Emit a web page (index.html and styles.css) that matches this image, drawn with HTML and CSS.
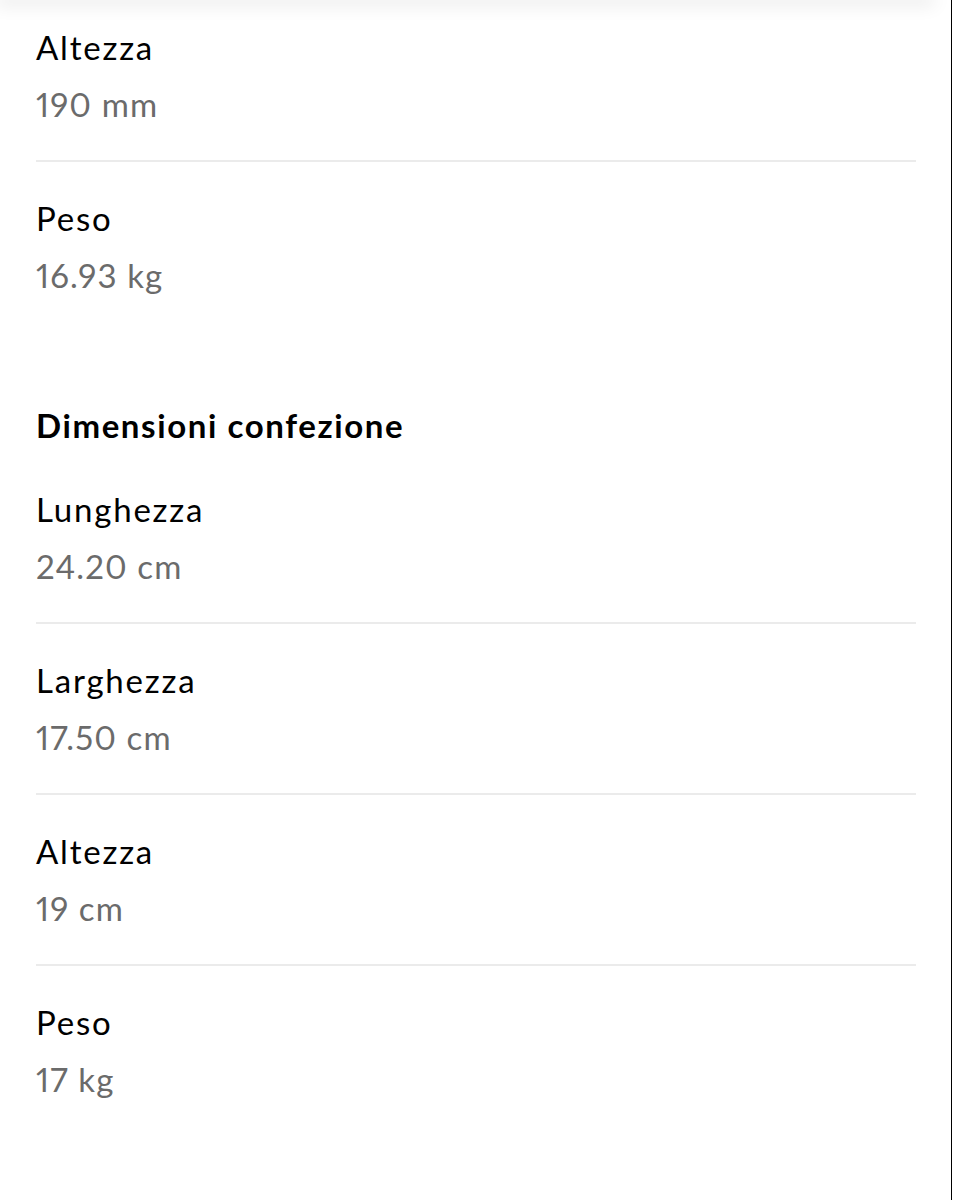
FILE: index.html
```html
<!DOCTYPE html>
<html lang="it">
<head>
    <meta charset="UTF-8">
    <meta name="viewport" content="width=device-width, initial-scale=1.0">
    <title>Specifiche</title>
    <link rel="stylesheet" href="styles.css">
</head>
<body>
    <div class="page">
        <div class="top-shadow"></div>

        <section class="spec-group spec-group-first">
            <div class="spec-row spec-row-first">
                <div class="spec-label">Altezza</div>
                <div class="spec-value">190 mm</div>
            </div>
            <div class="spec-row">
                <div class="spec-label">Peso</div>
                <div class="spec-value">16.93 kg</div>
            </div>
        </section>

        <section class="spec-group">
            <h2 class="spec-title">Dimensioni confezione</h2>
            <div class="spec-row">
                <div class="spec-label">Lunghezza</div>
                <div class="spec-value">24.20 cm</div>
            </div>
            <div class="spec-row">
                <div class="spec-label">Larghezza</div>
                <div class="spec-value">17.50 cm</div>
            </div>
            <div class="spec-row">
                <div class="spec-label">Altezza</div>
                <div class="spec-value">19 cm</div>
            </div>
            <div class="spec-row">
                <div class="spec-label">Peso</div>
                <div class="spec-value">17 kg</div>
            </div>
        </section>
    </div>
</body>
</html>
```

FILE: styles.css
```css
body {
    margin: 0;
    background-color: #fff;
    font-family: Lato, "Open Sans", sans-serif;
}
.page {
    width: 952px;
    min-height: 1200px;
    border-right: 1px solid #000;
    box-sizing: border-box;
    padding: 0 35px 0 36px;
    position: relative;
}
.top-shadow {
    position: absolute;
    top: 0;
    left: 0;
    right: 20px;
    height: 0;
    box-shadow: 0 0 18px 4px rgba(0, 0, 0, 0.12);
}
.spec-group-first {
    padding-bottom: 74px;
}
.spec-title {
    margin: 0;
    font-size: 33px;
    font-weight: 700;
    line-height: 40px;
    letter-spacing: 1.6px;
    color: #000;
}
.spec-row {
    padding: 36px 0;
    border-bottom: 2px solid #ebebeb;
}
.spec-row:last-child {
    border-bottom: none;
}
.spec-row-first {
    padding-top: 27px;
}
.spec-title + .spec-row {
    padding-top: 44px;
}
.spec-label {
    font-size: 33px;
    line-height: 40px;
    letter-spacing: 1.8px;
    color: #000;
}
.spec-value {
    margin-top: 17px;
    font-size: 33px;
    line-height: 40px;
    letter-spacing: 1.1px;
    font-variant-numeric: proportional-nums;
    color: #6b6b6b;
}
```
